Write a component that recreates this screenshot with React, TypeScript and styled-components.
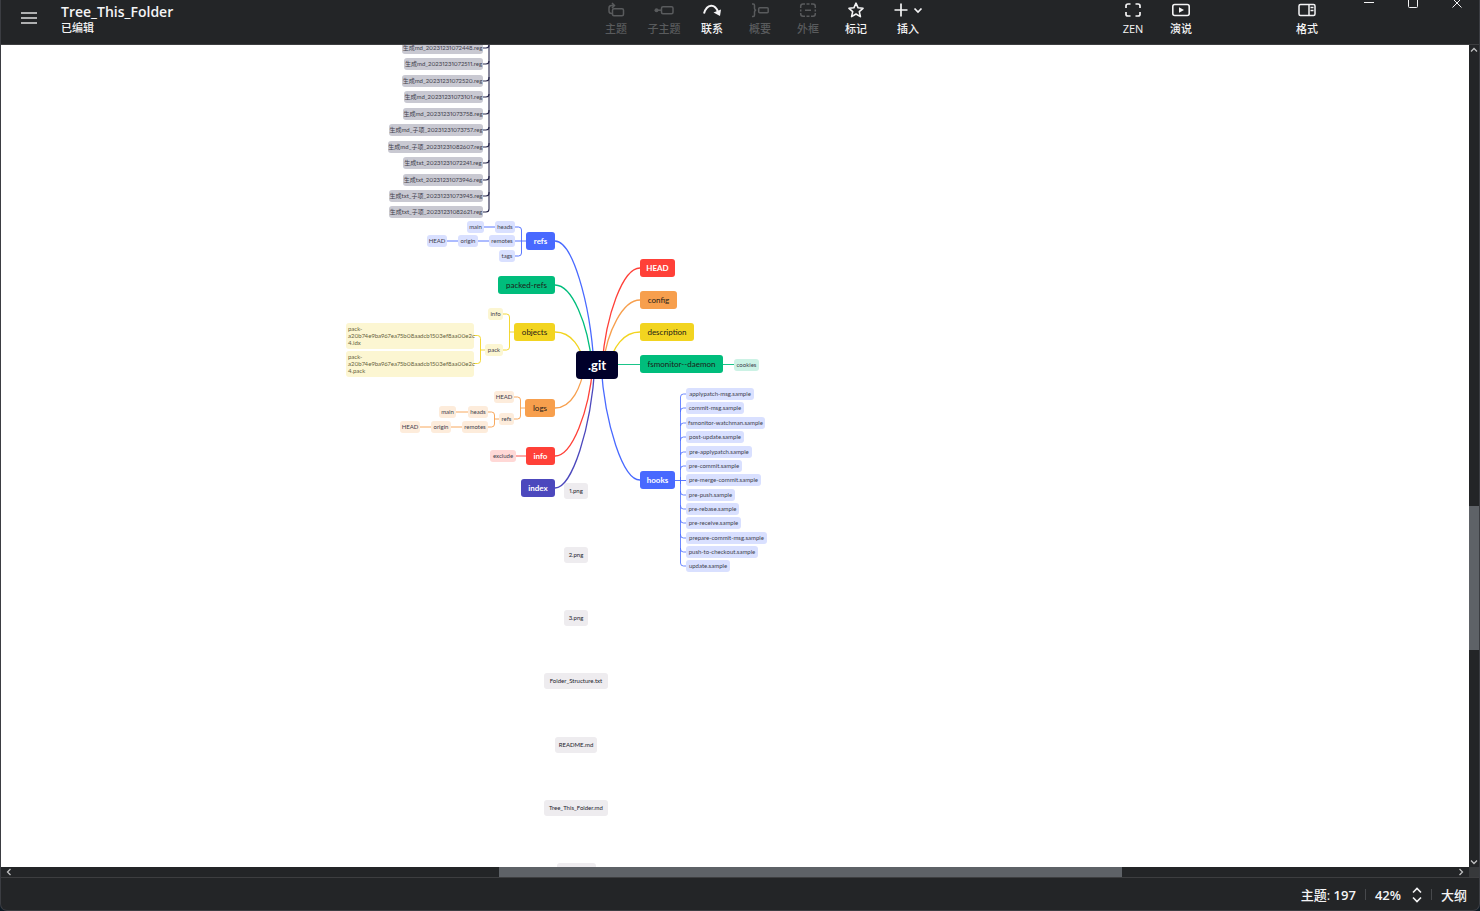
import React from "react";
import styled, { createGlobalStyle, css } from "styled-components";

const GlobalStyle = createGlobalStyle`
  * { box-sizing: border-box; }
  body {
    margin: 0;
    background: #0d1a24;
    font-family: "Open Sans", "Noto Sans CJK SC", sans-serif;
    color: #f4f4f5;
  }
  button { font: inherit; color: inherit; background: none; border: 0; padding: 0; }
`;

const Window = styled.div`
  height: 100vh;
  display: flex;
  flex-direction: column;
  overflow: hidden;
  background: #232527;
  border: 1px solid #3b3d42;
  border-top: 0;
  border-radius: 0 0 7px 7px;
`;

/* ---------- header ---------- */

const Header = styled.header`
  flex: none;
  height: 45px;
  display: grid;
  grid-template-columns: 591fr auto 543fr;
  border-bottom: 1px solid #3d3e40;
`;

const HeaderLeft = styled.div`
  display: flex;
  align-items: flex-start;
  gap: 24px;
  padding-left: 20px;
`;

const MenuButton = styled.button`
  height: 36px;
  display: flex;
  align-items: center;
`;

const TitleBlock = styled.div`
  display: flex;
  flex-direction: column;
  padding-top: 2px;
`;

const Title = styled.h1`
  margin: 0;
  font-size: 14px;
  line-height: 20px;
  font-weight: 600;
`;

const Status = styled.span`
  font-size: 11px;
  line-height: 12px;
  font-weight: 500;
`;

const Tools = styled.div`
  display: flex;
`;

const HeaderRight = styled.div`
  display: flex;
  align-items: flex-start;
  justify-content: flex-end;
`;

const ToolButton = styled.button<{ $wide?: boolean }>`
  width: ${(p) => (p.$wide ? 56 : 48)}px;
  height: 40px;
  padding-top: 2px;
  display: flex;
  flex-direction: column;
  align-items: center;
  gap: 2px;
  font-size: 11px;
  line-height: 18px;
  font-weight: 500;
  white-space: nowrap;
  &:disabled { color: #595b5d; }
`;

const IconRow = styled.span`
  height: 16px;
  display: flex;
  gap: 5px;
  align-items: center;
`;

const FormatSlot = styled.div`
  margin-left: 78px;
  margin-right: 16px;
`;

const WindowControl = styled.button`
  width: 44px;
  height: 12px;
  display: flex;
  justify-content: center;
`;

/* ---------- workspace ---------- */

const Workspace = styled.div`
  flex: 1;
  min-height: 0;
  display: grid;
  grid-template-columns: minmax(0, 1fr) 10px;
  grid-template-rows: minmax(0, 1fr) 10px;
`;

const Canvas = styled.main`
  position: relative;
  overflow: hidden;
  background: #fff;
`;

const MapLayer = styled.div`
  position: absolute;
  left: -1px;
  top: -45px;
  width: 1480px;
  height: 1000px;
  font-family: Lato, "Noto Sans CJK SC", sans-serif;
  font-variant-numeric: proportional-nums;
`;

const Links = styled.svg`
  position: absolute;
  inset: 0;
  width: 100%;
  height: 100%;
`;

const ScrollBar = styled.div<{ $vertical?: boolean }>`
  display: flex;
  flex-direction: ${(p) => (p.$vertical ? "column" : "row")};
  background: #232527;
`;

const ScrollArrow = styled.button`
  flex: none;
  width: 10px;
  height: 10px;
  display: flex;
  align-items: center;
  justify-content: center;
`;

const HorizontalArrow = styled(ScrollArrow)`
  width: 16px;
`;

const ScrollSpace = styled.div<{ $share: number }>`
  flex: ${(p) => p.$share} 0 0;
`;

const ScrollThumb = styled.div<{ $share: number }>`
  flex: ${(p) => p.$share} 0 0;
  background: #5e6267;
`;

const ScrollCorner = styled.div`
  background: #37393b;
`;

/* ---------- footer ---------- */

const Footer = styled.footer`
  flex: none;
  height: 33px;
  padding: 1px 12px 0 0;
  display: flex;
  align-items: center;
  justify-content: flex-end;
  gap: 9px;
  border-top: 1px solid #3d3e40;
  font-size: 13px;
  line-height: 18px;
  font-weight: 500;
`;

const Divider = styled.span`
  width: 1px;
  height: 11px;
  background: #47494c;
`;

const ZoomButton = styled.button`
  display: flex;
  align-items: center;
  gap: 11px;
`;

const OutlineButton = styled.button``;

const Count = styled.b`
  font-weight: 600;
`;

/* ---------- mind map nodes ---------- */

type Kind = "root" | "main" | "sub" | "float" | "note";

const kinds = {
  root: css`
    height: 28px;
    border-radius: 4px;
    font-size: 13px;
    line-height: 28px;
    font-weight: 700;
    color: #fff;
  `,
  main: css`
    height: 18px;
    border-radius: 3px;
    font-size: 8px;
    line-height: 18px;
  `,
  sub: css`
    height: 12px;
    border-radius: 3px;
    font-size: 6px;
    line-height: 12px;
    color: #40404c;
  `,
  float: css`
    height: 16px;
    border-radius: 3px;
    font-size: 6px;
    line-height: 16px;
    color: #22222c;
  `,
  note: css`
    height: 26px;
    padding: 2px 2px 0;
    border-radius: 3px;
    font-size: 6px;
    line-height: 7px;
    color: #66623e;
  `,
};

const Node = styled.div<{ $kind: Kind; $fill: string; $light?: boolean }>`
  position: absolute;
  text-align: ${(p) => (p.$kind === "note" ? "left" : "center")};
  white-space: pre;
  background: ${(p) => p.$fill};
  ${(p) => kinds[p.$kind]}
  ${(p) => p.$kind === "main" && (p.$light ? "color: #fff; font-weight: 700;" : "color: #1e2018;")}
`;

const heights: Record<Kind, number> = { root: 28, main: 18, sub: 12, float: 16, note: 26 };

const C = {
  root: "#00002a",
  blue: "#4869ff",
  green: "#00bd7c",
  yellow: "#f2d420",
  orange: "#f79f4d",
  red: "#ff4038",
  indigo: "#4c48bd",
  paleBlue: "#d9e0ff",
  paleGreen: "#ccf2e5",
  paleYellow: "#fcf6d2",
  paleOrange: "#fdecdb",
  paleRed: "#ffd8d6",
  grey: "#c9c9d2",
  mist: "#eeecef",
  ink: "#26264a",
};

interface NodeData {
  text: string;
  /* left edge, vertical centre and width on the map */
  x: number;
  y: number;
  w: number;
  kind: Kind;
  fill: string;
  light?: boolean;
}

const n = (kind: Kind, fill: string, text: string, x: number, y: number, w: number, light = false): NodeData => ({
  kind, fill, text, x, y, w, light,
});

const regFiles: [string, number, number][] = [
  ["生成md_20231231072448.reg", 402, 48],
  ["生成md_20231231072511.reg", 404, 64],
  ["生成md_20231231072520.reg", 402, 81],
  ["生成md_20231231073101.reg", 404, 97],
  ["生成md_20231231073758.reg", 403, 114],
  ["生成md_子项_20231231073757.reg", 389, 130],
  ["生成md_子项_20231231082607.reg", 388, 147],
  ["生成txt_20231231072241.reg", 403, 163],
  ["生成txt_20231231073946.reg", 403, 180],
  ["生成txt_子项_20231231073945.reg", 389, 196],
  ["生成txt_子项_20231231082621.reg", 389, 212],
];

const hookFiles: [string, number, number][] = [
  ["applypatch-msg.sample", 394, 68],
  ["commit-msg.sample", 408, 58],
  ["fsmonitor-watchman.sample", 423, 79],
  ["post-update.sample", 437, 58],
  ["pre-applypatch.sample", 452, 66],
  ["pre-commit.sample", 466, 56],
  ["pre-merge-commit.sample", 480, 75],
  ["pre-push.sample", 495, 49],
  ["pre-rebase.sample", 509, 53],
  ["pre-receive.sample", 523, 55],
  ["prepare-commit-msg.sample", 538, 81],
  ["push-to-checkout.sample", 552, 72],
  ["update.sample", 566, 44],
];

const nodes: NodeData[] = [
  ...regFiles.map(([t, x, y]) => n("sub", C.grey, t, x, y, 483 - x)),
  ...hookFiles.map(([t, y, w]) => n("sub", C.paleBlue, t, 686, y, w)),
  n("root", C.root, ".git", 576, 365, 42),
  n("main", C.red, "HEAD", 640, 268, 35, true),
  n("main", C.orange, "config", 640, 300, 37),
  n("main", C.yellow, "description", 640, 332, 54),
  n("main", C.green, "fsmonitor--daemon", 640, 364, 83),
  n("main", C.blue, "hooks", 640, 480, 35, true),
  n("main", C.blue, "refs", 526, 241, 29, true),
  n("main", C.green, "packed-refs", 498, 285, 57),
  n("main", C.yellow, "objects", 514, 332, 41),
  n("main", C.orange, "logs", 525, 408, 30),
  n("main", C.red, "info", 526, 456, 29, true),
  n("main", C.indigo, "index", 521, 488, 34, true),
  n("sub", C.paleGreen, "cookies", 734, 365, 25),
  n("sub", C.paleBlue, "main", 467, 227, 17),
  n("sub", C.paleBlue, "heads", 495, 227, 20),
  n("sub", C.paleBlue, "HEAD", 427, 241, 20),
  n("sub", C.paleBlue, "origin", 458, 241, 20),
  n("sub", C.paleBlue, "remotes", 489, 241, 26),
  n("sub", C.paleBlue, "tags", 499, 256, 16),
  n("sub", C.paleYellow, "info", 488, 314, 15),
  n("sub", C.paleYellow, "pack", 485, 350, 18),
  n("note", C.paleYellow, "pack-\na20b74e9ba967ea75b08aadcb1503ef8aa00e2c\n4.idx", 346, 336, 128),
  n("note", C.paleYellow, "pack-\na20b74e9ba967ea75b08aadcb1503ef8aa00e2c\n4.pack", 346, 364, 128),
  n("sub", C.paleOrange, "HEAD", 494, 397, 20),
  n("sub", C.paleOrange, "refs", 499, 419, 15),
  n("sub", C.paleOrange, "main", 439, 412, 17),
  n("sub", C.paleOrange, "heads", 468, 412, 20),
  n("sub", C.paleOrange, "HEAD", 400, 427, 20),
  n("sub", C.paleOrange, "origin", 431, 427, 20),
  n("sub", C.paleOrange, "remotes", 462, 427, 26),
  n("sub", C.paleRed, "exclude", 490, 456, 26),
  n("float", C.mist, "1.png", 564, 491, 24),
  n("float", C.mist, "2.png", 564, 555, 24),
  n("float", C.mist, "3.png", 564, 618, 24),
  n("float", C.mist, "Folder_Structure.txt", 544, 681, 64),
  n("float", C.mist, "README.md", 555, 745, 42),
  n("float", C.mist, "Tree_This_Folder.md", 544, 808, 64),
  n("float", C.mist, "", 557, 871, 39),
];

/* branch from the root (rootX, 365) to the edge of a main topic */
const branches: [string, number, number, number][] = [
  [C.blue, 594, 555, 241],
  [C.green, 592, 555, 285],
  [C.yellow, 585, 555, 332],
  [C.orange, 585, 555, 408],
  [C.red, 593, 555, 456],
  [C.indigo, 595, 555, 488],
  [C.red, 602, 640, 268],
  [C.orange, 603, 640, 300],
  [C.yellow, 609, 640, 332],
  [C.blue, 601, 640, 480],
];

const branchPath = (rx: number, x: number, y: number) => {
  const side = x < rx ? -1 : 1;
  const midY = 365 + (y - 365) * 0.52;
  return `M${rx} 365C${rx + side * 4} ${midY} ${x - side * 17} ${y} ${x} ${y}`;
};

/* rounded elbow from a topic edge to the spine it hangs on */
const elbow = (x: number, y: number, spine: number, toY: number) => {
  const sx = spine > x ? -3 : 3;
  const sy = toY > y ? 3 : -3;
  return `M${x} ${y}H${spine + sx}Q${spine} ${y} ${spine} ${y + sy}V${toY}`;
};

const straight = (x1: number, x2: number, y: number) => `M${x1} ${y}H${x2}`;

const twigs: [string, string][] = [
  [C.green, straight(618, 640, 364.5)],
  [C.green, straight(723, 734, 364.5)],
  [C.blue, elbow(515, 227, 521.5, 241) + elbow(515, 256, 521.5, 241) + straight(515, 526, 241)],
  [C.blue, straight(484, 495, 227) + straight(447, 458, 241) + straight(478, 489, 241)],
  [C.yellow, elbow(503, 314, 509.5, 332) + elbow(503, 350, 509.5, 332) + straight(509.5, 514, 332)],
  [C.yellow, elbow(474, 335.5, 480.5, 350) + elbow(474, 363.5, 480.5, 350) + straight(480.5, 485, 350)],
  [C.orange, elbow(514, 397, 520.5, 408) + elbow(514, 419, 520.5, 408) + straight(520.5, 525, 408)],
  [C.orange, elbow(488, 412, 494.5, 419) + elbow(488, 427, 494.5, 419) + straight(494.5, 499, 419)],
  [C.orange, straight(456, 468, 412) + straight(420, 431, 427) + straight(451, 462, 427)],
  [C.red, straight(516, 526, 456)],
  [C.blue, straight(675, 686, 480.5)],
];

const MindMap = () => (
  <MapLayer>
    <Links aria-hidden="true" fill="none">
      {branches.map(([color, rx, x, y]) => (
        <path key={`${x}-${y}`} d={branchPath(rx, x, y)} stroke={color} strokeWidth="1.3" />
      ))}
      {twigs.map(([color, d]) => (
        <path key={d} d={d} stroke={color} strokeWidth="0.9" />
      ))}
      {hookFiles.map(([t, y]) => y !== 480 && (
        <path key={t} d={elbow(686, y, 680.5, y < 480 ? y + 18 : y - 18)} stroke={C.blue} strokeWidth="0.8" />
      ))}
      {regFiles.map(([t, , y]) => (
        <path key={t} d={elbow(483, y, 489, y - 20)} stroke={C.ink} strokeWidth="1.1" />
      ))}
    </Links>
    {nodes.map((d, i) => (
      <Node
        key={i}
        $kind={d.kind}
        $fill={d.fill}
        $light={d.light}
        style={{ left: d.x, top: d.y - heights[d.kind] / 2, width: d.w }}
      >
        {d.text}
      </Node>
    ))}
  </MapLayer>
);

/* ---------- icons ---------- */

const Icon = styled.svg.attrs({ fill: "none", stroke: "currentColor", "aria-hidden": true })`
  display: block;
  flex: none;
`;

const MenuIcon = () => (
  <Icon width="16" height="14" strokeWidth="1.700" opacity=".9"><path d="M0 2H16M0 7H16M0 12H16" /></Icon>
);
const TopicIcon = () => (
  <Icon width="18" height="16" strokeWidth="1.5">
    <rect x="5.5" y="6.7" width="11" height="7" rx="1.5" />
    <path d="M5.500 11.500H4.500Q2 11.500 2 9V6Q2 3.500 4.500 3.500H7M5 1L7.500 3.500L5 6" />
  </Icon>
);
const SubtopicIcon = () => (
  <Icon width="20" height="16" strokeWidth="1.5">
    <rect x="7.500" y="4.700" width="11.500" height="7" rx="1.500" />
    <path d="M3 8.200H7.500" />
    <circle cx="2.500" cy="8.200" r="2" fill="currentColor" stroke="none" />
  </Icon>
);
const RelationIcon = () => (
  <Icon width="20" height="16" strokeWidth="2">
    <path d="M2 11.500C5 1.500 13 1.500 16 10" />
    <path d="M11.500 10.500L19 7.500L18 14Z" fill="currentColor" stroke="none" />
  </Icon>
);
const SummaryIcon = () => (
  <Icon width="18" height="16" strokeWidth="1.5">
    <path d="M1 2H2.200Q3.500 2 3.500 3.500V6.500Q3.500 8.200 5.200 8.200Q3.500 8.200 3.500 10V13Q3.500 14.500 2.200 14.500H1" />
    <rect x="7.700" y="5.700" width="9.500" height="5" rx="1" />
  </Icon>
);
const BoundaryIcon = () => (
  <Icon width="18" height="16" strokeWidth="1.500">
    <path d="M6 2H4Q1.700 2 1.700 4.300V6M1.700 7.500V9.500M1.700 11V12Q1.700 14.200 4 14.200H6M7.500 2H10.500M7.500 14.200H10.500M12 2H14Q16.300 2 16.300 4.300V6M16.300 7.500V9.500M16.300 11V12Q16.300 14.200 14 14.200H12M6 8.200H12" />
  </Icon>
);
const StarIcon = () => (
  <Icon width="16" height="16" strokeWidth="1.600" strokeLinejoin="round">
    <path d="M8 1.200L10.100 5.800L15 6.300L11.300 9.600L12.400 14.600L8 12L3.600 14.600L4.700 9.600L1 6.300L5.900 5.800Z" />
  </Icon>
);
const PlusIcon = () => (
  <Icon width="14" height="14" strokeWidth="1.700"><path d="M7 .5V13.500M.5 7H13.500" /></Icon>
);
const CaretIcon = () => (
  <Icon width="10" height="8" strokeWidth="1.700"><path d="M1.500 2.500L5 6L8.500 2.500" /></Icon>
);
const ZenIcon = () => (
  <Icon width="16" height="16" strokeWidth="1.700">
    <path d="M5.500 2H3Q1 2 1 4V6M10.500 2H13Q15 2 15 4V6M1 10V12.500Q1 14 3 14H5.500M15 10V12.500Q15 14 13 14H10.500" />
  </Icon>
);
const PresentIcon = () => (
  <Icon width="18" height="16" strokeWidth="1.600">
    <rect x=".8" y="2.500" width="16.400" height="11" rx="2" />
    <path d="M7 5.300L12 8L7 10.700Z" fill="currentColor" stroke="none" />
  </Icon>
);
const FormatIcon = () => (
  <Icon width="18" height="16" strokeWidth="1.500">
    <rect x="1" y="2.500" width="16" height="11" rx="1.500" />
    <path d="M11 2.500V13.500M12.500 5.500H15.500M12.500 8.500H15.500" />
  </Icon>
);
const StepperIcon = () => (
  <Icon width="10" height="16" strokeWidth="1.600"><path d="M1 5.500L5 1.500L9 5.500M1 10.500L5 14.500L9 10.500" /></Icon>
);

const arrows = {
  up: "M1 5.500L4 2.500L7 5.500",
  down: "M1 2.500L4 5.500L7 2.500",
  left: "M5.500 1L2.500 4L5.500 7",
  right: "M2.500 1L5.500 4L2.500 7",
};
const Arrow = ({ dir }: { dir: keyof typeof arrows }) => (
  <Icon width="8" height="8" strokeWidth="1.300" opacity=".75"><path d={arrows[dir]} /></Icon>
);

const tools = [
  { label: "主题", icon: <TopicIcon />, disabled: true },
  { label: "子主题", icon: <SubtopicIcon />, disabled: true },
  { label: "联系", icon: <RelationIcon /> },
  { label: "概要", icon: <SummaryIcon />, disabled: true },
  { label: "外框", icon: <BoundaryIcon />, disabled: true },
  { label: "标记", icon: <StarIcon /> },
  { label: "插入", icon: <><PlusIcon /><CaretIcon /></>, wide: true },
];

export default function App() {
  return (
    <>
      <GlobalStyle />
      <Window>
        <Header>
          <HeaderLeft>
            <MenuButton aria-label="菜单"><MenuIcon /></MenuButton>
            <TitleBlock>
              <Title>Tree_This_Folder</Title>
              <Status>已编辑</Status>
            </TitleBlock>
          </HeaderLeft>
          <Tools>
            {tools.map((t) => (
              <ToolButton key={t.label} disabled={t.disabled} $wide={t.wide}>
                <IconRow>{t.icon}</IconRow>
                {t.label}
              </ToolButton>
            ))}
          </Tools>
          <HeaderRight>
            <ToolButton><IconRow><ZenIcon /></IconRow>ZEN</ToolButton>
            <ToolButton><IconRow><PresentIcon /></IconRow>演说</ToolButton>
            <FormatSlot>
              <ToolButton><IconRow><FormatIcon /></IconRow>格式</ToolButton>
            </FormatSlot>
            <WindowControl aria-label="最小化">
              <Icon width="10" height="10"><path d="M0 2.500H10" /></Icon>
            </WindowControl>
            <WindowControl aria-label="最大化">
              <Icon width="10" height="10"><path d="M.5 0V6.500Q.5 7.500 1.500 7.500H8.500Q9.500 7.500 9.500 6.500V0" /></Icon>
            </WindowControl>
            <WindowControl aria-label="关闭">
              <Icon width="10" height="10"><path d="M.5 -1.500L9.500 7.500M9.500 -1.500L.5 7.500" /></Icon>
            </WindowControl>
          </HeaderRight>
        </Header>

        <Workspace>
          <Canvas><MindMap /></Canvas>
          <ScrollBar $vertical>
            <ScrollArrow aria-label="向上滚动"><Arrow dir="up" /></ScrollArrow>
            <ScrollSpace $share={451} />
            <ScrollThumb $share={144} />
            <ScrollSpace $share={207} />
            <ScrollArrow aria-label="向下滚动"><Arrow dir="down" /></ScrollArrow>
          </ScrollBar>
          <ScrollBar>
            <HorizontalArrow aria-label="向左滚动"><Arrow dir="left" /></HorizontalArrow>
            <ScrollSpace $share={482} />
            <ScrollThumb $share={623} />
            <ScrollSpace $share={331} />
            <HorizontalArrow aria-label="向右滚动"><Arrow dir="right" /></HorizontalArrow>
          </ScrollBar>
          <ScrollCorner />
        </Workspace>

        <Footer>
          <span>主题: <Count>197</Count></span>
          <Divider />
          <ZoomButton><Count>42%</Count><StepperIcon /></ZoomButton>
          <Divider />
          <OutlineButton>大纲</OutlineButton>
        </Footer>
      </Window>
    </>
  );
}
